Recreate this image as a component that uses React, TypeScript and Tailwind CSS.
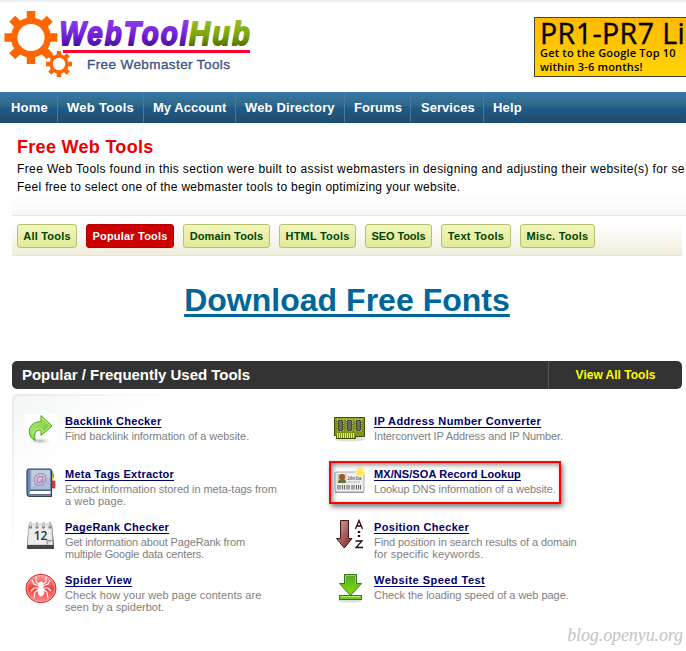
import React from "react";

const sans = "font-['Liberation_Sans',Arial,sans-serif]";

function Gear({ cx, cy, r, body, hole, tooth }: { cx: number; cy: number; r: number; body: number; hole: number; tooth: number }) {
  return (
    <g fill="#ff6600">
      {[0, 45, 90, 135].map((a) => (
        <rect key={a} x={cx - tooth / 2} y={cy - r} width={tooth} height={2 * r} transform={`rotate(${a} ${cx} ${cy})`} />
      ))}
      <circle cx={cx} cy={cy} r={body} />
      <circle cx={cx} cy={cy} r={hole} fill="#fff" />
    </g>
  );
}

function Logo() {
  return (
    <svg width="270" height="86" viewBox="0 0 270 86" className="block">
      <defs>
        <linearGradient id="purple" x1="0" y1="0" x2="0" y2="1">
          <stop offset="0.2" stopColor="#8a3be8" />
          <stop offset="0.55" stopColor="#7420dc" />
          <stop offset="0.85" stopColor="#4a0f9a" />
        </linearGradient>
        <linearGradient id="olive" x1="0" y1="0" x2="0" y2="1">
          <stop offset="0.2" stopColor="#94bb22" />
          <stop offset="0.55" stopColor="#7ea60c" />
          <stop offset="0.85" stopColor="#527000" />
        </linearGradient>
      </defs>
      <Gear cx={31} cy={37.5} r={26.5} body={20} hole={13.6} tooth={8.5} />
      <Gear cx={59} cy={64} r={13} body={9.7} hole={6.2} tooth={4.6} />
      <g fontFamily="'Liberation Sans',Arial,sans-serif" fontWeight="700" fontStyle="italic" fontSize="34" letterSpacing="2.500" strokeWidth="1.800" strokeLinejoin="round">
        <text x="59.500" y="44.800" textLength="130" lengthAdjust="spacingAndGlyphs" fill="url(#purple)" stroke="url(#purple)">WebTool</text>
        <text x="189" y="44.800" textLength="63" lengthAdjust="spacingAndGlyphs" fill="url(#olive)" stroke="url(#olive)">Hub</text>
      </g>
      <rect x="63" y="50" width="187" height="3" fill="#ff0033" />
      <text x="87" y="69" fontFamily="'Liberation Sans',Arial,sans-serif" fontSize="13.500" textLength="143" fill="#3c5480" stroke="#3c5480" strokeWidth="0.35">Free Webmaster Tools</text>
    </svg>
  );
}

function ArrowIcon() {
  return (
    <svg width="32" height="32" viewBox="0 0 32 32">
      <defs>
        <linearGradient id="ga" x1="0" y1="0" x2="1" y2="1">
          <stop offset="0" stopColor="#c4f58c" />
          <stop offset="1" stopColor="#55bb18" />
        </linearGradient>
        <radialGradient id="sh"><stop offset="0" stopColor="#aaa" /><stop offset="1" stopColor="#fff" stopOpacity="0" /></radialGradient>
      </defs>
      <rect width="32" height="30" fill="#fff" />
      <ellipse cx="15" cy="27" rx="13" ry="4" fill="url(#sh)" />
      <path d="M16 1.500 27 12 16 21.500V16C10 15.500 8.500 20 10.500 26.500 1 23 2 8 16 7.500Z" fill="url(#ga)" stroke="#4aa51c" strokeLinejoin="round" />
      <path d="M17 4 25.500 12 17 19V15C11 14 8 16.500 8 21" fill="none" stroke="#d4ffa8" strokeWidth=".8" />
    </svg>
  );
}

function BookIcon() {
  return (
    <svg width="32" height="32" viewBox="0 0 32 32">
      <path d="M25 4h2l2 5-2 5h-2z" fill="#9bbb3a" stroke="#68812b" strokeWidth=".6" />
      <path d="M25 9h3v5h-3z" fill="#f2c42c" />
      <path d="M25 14h5v7h-5z" fill="#e63939" stroke="#a91414" strokeWidth=".6" />
      <path d="M4 2h21q1.500 0 1.500 2v25.500H5Q2 29.500 2 26V5q0-3 2-3z" fill="#6c8bb8" stroke="#30435f" strokeWidth="1.200" />
      <path d="M5.500 3h19.500v19H5.500z" fill="#a9bfdb" />
      <path d="M7 3h18v8Q12 13 7 20z" fill="#bdcfe5" />
      <path d="M4.500 23.500h21.500v4H5q-2-2-.5-4z" fill="#fff" stroke="#41546f" strokeWidth=".8" />
      <text x="15.200" y="17" textAnchor="middle" fontFamily="'Liberation Sans',sans-serif" fontSize="15" fill="#c07fa9">@</text>
    </svg>
  );
}

function CalendarIcon() {
  return (
    <svg width="32" height="32" viewBox="0 0 32 32">
      <path d="M4 5h23l2 19v5H2v-5z" fill="#555" />
      <path d="M4 4h22.500l1.500 21H2.500z" fill="#ececec" stroke="#aaa" strokeWidth=".6" />
      <path d="M2.500 25h26v4h-26z" fill="#454545" />
      <path d="M22 24.500v-4h6" fill="#ccc" stroke="#777" strokeWidth=".8" />
      {[5.5, 12, 18.5, 25].map((x) => (
        <g key={x}>
          <circle cx={x} cy="7" r="1.700" fill="#888" />
          <path d={`M${x} 7V2`} stroke="#999" strokeWidth="1.800" />
          <path d={`M${x} 6.500V2.500`} stroke="#fff" strokeWidth=".7" />
        </g>
      ))}
      <text x="15.500" y="20" textAnchor="middle" fontFamily="'Open Sans',sans-serif" fontWeight="600" fontSize="12" fill="#333">12</text>
    </svg>
  );
}

function SpiderIcon() {
  return (
    <svg width="32" height="32" viewBox="0 0 32 32">
      <defs>
        <linearGradient id="red" x1="0" y1="0" x2="0" y2="1">
          <stop offset="0" stopColor="#ff9c9c" />
          <stop offset=".5" stopColor="#f04444" />
          <stop offset="1" stopColor="#ff8c8c" />
        </linearGradient>
      </defs>
      <ellipse cx="16" cy="15.500" rx="15" ry="14.200" fill="url(#red)" stroke="#c93030" />
      <ellipse cx="16" cy="15.500" rx="13.800" ry="13" fill="none" stroke="#ffb5b5" strokeWidth=".7" />
      <path d="M15 12 11 9V4M17 12 21 9V4M14 13 9 11 7 7M18 13 23 11 25 7M14 15 9 15 6 18M18 15 23 15 26 18M14 16 10 19 9 25M18 16 22 19 23 25" stroke="#fff" strokeWidth="1.100" fill="none" />
      <ellipse cx="16" cy="12" rx="2.500" ry="3.500" fill="#fff" />
      <ellipse cx="16" cy="18.500" rx="3.300" ry="5" fill="#fff" />
    </svg>
  );
}

function ChipIcon() {
  return (
    <svg width="34" height="32" viewBox="0 0 34 32">
      <ellipse cx="18" cy="26" rx="15" ry="2.500" fill="#ddd" />
      <path d="M2.500 4.500h30v19h-9v2h-19v-3h-2z" fill="#829214" stroke="#3f4a05" />
      <path d="M3.500 5.500h28v1h-28z" fill="#b6c33c" />
      {[8.5, 17.5, 26.5].map((x) => (
        <g key={x}>
          <rect x={x - 2.5} y="7.500" width="5" height="10" rx="1" fill="#6a6d60" stroke="#252b0c" />
          <rect x={x - 3} y="7" width="6" height="11" fill="none" stroke="#c7cfac" strokeWidth="1" strokeDasharray="1 1.200" />
        </g>
      ))}
      {[5, 7, 9, 11, 13, 15, 17, 19, 21].map((x) => (
        <path key={x} d={`M${x + 0.5} 20v5`} stroke="#f3f044" />
      ))}
    </svg>
  );
}

function CardIcon() {
  return (
    <svg width="34" height="32" viewBox="0 0 34 32">
      <rect x="3" y="6" width="29" height="20" rx="2" fill="#eee" stroke="#aaa" />
      <path d="M3 26.500h29" stroke="#999" />
      <rect x="5.500" y="8" width="9" height="9" fill="#c9cfb9" />
      <path d="M6 17q0-4 4-4t4 4z" fill="#62782d" />
      <circle cx="10" cy="11" r="3" fill="#9c5a26" />
      <text x="15.500" y="13.500" fontFamily="'Liberation Sans',sans-serif" fontWeight="700" fontSize="4.500" textLength="14" lengthAdjust="spacingAndGlyphs" fill="#555">John Doe</text>
      <path d="M16 16h12" stroke="#aaa" strokeDasharray="2 .5" />
      {[6, 8, 10.5, 12.5, 15, 17, 20, 22, 24.5, 26.5, 28.5].map((x) => (
        <path key={x} d={`M${x} 19v4.500`} stroke="#666" strokeWidth="1.100" />
      ))}
      <circle cx="28" cy="6" r="5" fill="#fff7a0" opacity=".9" />
      <path d="m28 2 1 2 2.300-.4-.5 2.200 1.700 1.200-2 1 .2 2.200-2.200-.8-1.800 1.500-.6-2.200-2.200-.4 1.300-1.800L24 4.600l2.300.3z" fill="#ffe95c" />
    </svg>
  );
}

function SortIcon() {
  return (
    <svg width="34" height="32" viewBox="0 0 34 32">
      <defs>
        <linearGradient id="brown" x1="0" y1="0" x2="1" y2="1">
          <stop offset="0" stopColor="#dba5a5" />
          <stop offset="1" stopColor="#792020" />
        </linearGradient>
      </defs>
      <path d="M8.500 1.500h8v18h3.500L12.300 29 4.500 19.500h4z" fill="url(#brown)" stroke="#4a1515" />
      <path d="M23.500 10 27 1.500 30.500 10M25 7h4.500" fill="none" stroke="#250b0b" strokeWidth="1.300" />
      <path d="M27 12v8" stroke="#250b0b" strokeWidth="2.400" strokeDasharray="2 2" />
      <path d="M23.500 22h6.500l-6 6.500h7" fill="none" stroke="#250b0b" strokeWidth="1.300" />
    </svg>
  );
}

function DownloadIcon() {
  return (
    <svg width="34" height="32" viewBox="0 0 34 32">
      <defs>
        <linearGradient id="green" x1="0" y1="0" x2="0" y2="1">
          <stop offset="0" stopColor="#55a32c" />
          <stop offset="1" stopColor="#83e509" />
        </linearGradient>
      </defs>
      <ellipse cx="18" cy="28.500" rx="12" ry="2" fill="#ddd" />
      <path d="M12.500 2.500h12v9h5L18.500 23.500 7.500 11.500h5z" fill="url(#green)" stroke="#347b0c" />
      <path d="M13.500 10V3.500h10V12" fill="none" stroke="#a1dc79" strokeWidth=".8" />
      <rect x="7.500" y="23.500" width="22" height="4" fill="#72cf21" stroke="#347b0c" />
      <path d="M8.500 24.500h20" stroke="#b7ee7d" />
    </svg>
  );
}

const nav: [string, string][] = [
  ["Home", "w-[58px] pl-[11px] tracking-[0.2px]"],
  ["Web Tools", "w-[86px] pl-[9px] tracking-[0.28px]"],
  ["My Account", "w-[92px] pl-[9px] tracking-[0.02px]"],
  ["Web Directory", "w-[109px] pl-[9px] tracking-[0.14px]"],
  ["Forums", "w-[66px] pl-[9px] tracking-[0.05px]"],
  ["Services", "w-[73px] pl-[10px] tracking-[0.02px]"],
  ["Help", "w-[60px] pl-[9px] tracking-[0.2px]"],
];

const tabs: [string, string][] = [
  ["All Tools", "w-[60px] tracking-[0.2px]"],
  ["Popular Tools", "w-[88px] tracking-[0.2px]"],
  ["Domain Tools", "w-[87px] tracking-[0.15px]"],
  ["HTML Tools", "w-[77px] tracking-[0.2px]"],
  ["SEO Tools", "w-[67px] tracking-[-0.1px]"],
  ["Text Tools", "w-[70px] tracking-[0.3px]"],
  ["Misc. Tools", "w-[75px] tracking-[0.25px]"],
];

type Line = [text: string, spacing: string];
type Tool = { icon: React.ReactNode; title: Line; lines: Line[]; marked?: boolean };

const left: Tool[] = [
  { icon: <ArrowIcon />, title: ["Backlink Checker", "tracking-[0.3px]"], lines: [["Find backlink information of a website.", "tracking-[-0.06px]"]] },
  {
    icon: <BookIcon />,
    title: ["Meta Tags Extractor", "tracking-[0.25px]"],
    lines: [["Extract information stored in meta-tags from", "tracking-[-0.05px]"], ["a web page.", "tracking-[0.1px]"]],
  },
  {
    icon: <CalendarIcon />,
    title: ["PageRank Checker", "tracking-[0.28px]"],
    lines: [["Get information about PageRank from", "tracking-[-0.15px]"], ["multiple Google data centers.", "tracking-[-0.14px]"]],
  },
  {
    icon: <SpiderIcon />,
    title: ["Spider View", "tracking-[0.45px]"],
    lines: [["Check how your web page contents are", "tracking-[0.09px]"], ["seen by a spiderbot.", "tracking-[0px]"]],
  },
];

const right: Tool[] = [
  { icon: <ChipIcon />, title: ["IP Address Number Converter", "tracking-[0.4px]"], lines: [["Interconvert IP Address and IP Number.", "tracking-[-0.12px]"]] },
  { icon: <CardIcon />, title: ["MX/NS/SOA Record Lookup", "tracking-[0.08px]"], lines: [["Lookup DNS information of a website.", "tracking-[-0.08px]"]], marked: true },
  {
    icon: <SortIcon />,
    title: ["Position Checker", "tracking-[0.33px]"],
    lines: [["Find position in search results of a domain", "tracking-[-0.08px]"], ["for specific keywords.", "tracking-[0.2px]"]],
  },
  { icon: <DownloadIcon />, title: ["Website Speed Test", "tracking-[0.46px]"], lines: [["Check the loading speed of a web page.", "tracking-[-0.04px]"]] },
];

function ToolRow({ tool, iconClass }: { tool: Tool; iconClass: string }) {
  return (
    <div className="relative flex h-[53px]">
      <div className={`w-[40px] shrink-0 ${iconClass}`}>{tool.icon}</div>
      <div className="pt-[1px] whitespace-nowrap">
        <a className={`block h-[15px] w-fit text-[11px] leading-[15px] font-bold text-[#000066] underline underline-offset-2 ${tool.title[1]}`}>{tool.title[0]}</a>
        {tool.lines.map(([text, spacing]) => (
          <p key={text} className={`h-[12px] text-[11px] leading-[15px] text-[#808080] ${spacing}`}>{text}</p>
        ))}
      </div>
      {tool.marked && (
        <div className="absolute -top-[5px] -left-[5px] h-[43px] w-[232px] border-2 border-[#ff0000] shadow-[2px_3px_5px_rgba(0,0,0,0.5),inset_2px_2px_5px_rgba(0,0,0,0.45)]" />
      )}
    </div>
  );
}

export default function App() {
  return (
    <div className={`h-[651px] w-[686px] overflow-hidden bg-white ${sans}`}>
      <header className="flex h-[92px] justify-between border-t-2 border-[#ecf0f4]">
        <div className="-mt-[2px]"><Logo /></div>
        <div className="mt-[15px] h-[60px] w-[152px] overflow-hidden border border-r-0 border-[#444] bg-linear-to-b from-[#ffb900] to-[#ffd500] pl-[5px] font-['Open_Sans',sans-serif] whitespace-nowrap text-black">
          <p className="-mt-px h-[29px] text-[28.5px] leading-[33px] font-medium tracking-[0.45px] [-webkit-text-stroke:0.4px_black]">PR1-PR7 Li</p>
          <p className="h-[14px] text-[11px] leading-[14px] font-semibold tracking-[0.2px]">Get to the Google Top 10</p>
          <p className="h-[14px] text-[11px] leading-[14px] font-semibold tracking-[0.2px]">within 3-6 months!</p>
        </div>
      </header>

      <nav className="flex h-[31px] bg-[linear-gradient(to_bottom,#3579a5_0%,#2f6688_45%,#205b87_50%,#1d4c72_100%)]">
        {nav.map(([label, cls], i) => (
          <a key={label} className={`${cls} ${i < 6 ? "border-r" : ""} my-px h-[29px] border-[#4b77a5] text-[13px] leading-[29px] font-bold whitespace-nowrap text-white`}>{label}</a>
        ))}
      </nav>

      <section className="ml-[12px] h-[93px] overflow-hidden border-b border-[#e5e5e5] bg-linear-to-b from-white from-75% to-[#f8f8f8] pt-[13px] pl-[5px] whitespace-nowrap">
        <h1 className="h-[24px] text-[18px] leading-[22px] font-bold tracking-[0.3px] text-[#ee0000]">Free Web Tools</h1>
        <p className="text-[12px] leading-[18px] tracking-[0.375px] text-black">Free Web Tools found in this section were built to assist webmasters in designing and adjusting their website(s) for se</p>
        <p className="text-[12px] leading-[18px] tracking-[0.29px] text-black">Feel free to select one of the webmaster tools to begin optimizing your website.</p>
      </section>

      <div className="mx-[12px] mr-[4px] flex h-[40px] gap-[9px] border-b border-[#efe3c5] bg-linear-to-b from-white from-20% to-[#f1eddc] pt-[8px] pl-[5px]">
        {tabs.map(([label, cls], i) => (
          <a key={label} className={`${cls} flex h-[24px] items-center justify-center rounded-[3px] border text-[11px] font-bold whitespace-nowrap ${i === 1 ? "border-[#b80000] bg-[#cc0000] text-white" : "border-[#b6c36c] bg-linear-to-b from-[#f2f5bd] to-[#e0e99a] text-[#004400]"}`}>{label}</a>
        ))}
      </div>

      <div className="flex h-[105px] justify-center pt-[26px] pl-[8px]">
        <a className="h-[37px] text-[32px] leading-[37px] font-bold tracking-[0.02px] whitespace-nowrap text-[#006699] underline decoration-[3px] underline-offset-[3px]">Download Free Fonts</a>
      </div>

      <div className="mr-[4px] ml-[12px] flex h-[28px] rounded-[5px] bg-[#333] whitespace-nowrap">
        <h2 className="w-[536px] pl-[10px] text-[15px] leading-[28px] font-bold tracking-[-0.03px] text-white">Popular / Frequently Used Tools</h2>
        <a className="w-[134px] border-l border-[#555] text-center text-[12px] leading-[28px] font-bold text-[#ffff00]">View All Tools</a>
      </div>

      <div className="mt-[5px] ml-[12px] h-[218px] rounded-tl-[6px] bg-[linear-gradient(135deg,#e6eaea_0px,#ffffff_120px)] pt-[2px] pl-[2px]">
        <main className="flex h-[216px] rounded-tl-[5px] bg-white bg-[linear-gradient(150deg,#f4f6f6_0px,#ffffff_80px)] pt-[17px] pl-[11px]">
          <div className="w-[309px]">{left.map((t) => <ToolRow key={t.title[0]} tool={t} iconClass="pt-px" />)}</div>
          <div>{right.map((t) => <ToolRow key={t.title[0]} tool={t} iconClass="-ml-[2px] mr-[2px]" />)}</div>
        </main>
      </div>

      <footer className="flex justify-end pt-[11px] pr-[3px]">
        <span className="h-[24px] font-['Liberation_Serif',serif] text-[18px] leading-[24px] tracking-[-0.1px] text-[#c4c4c4] italic">blog.openyu.org</span>
      </footer>
    </div>
  );
}
